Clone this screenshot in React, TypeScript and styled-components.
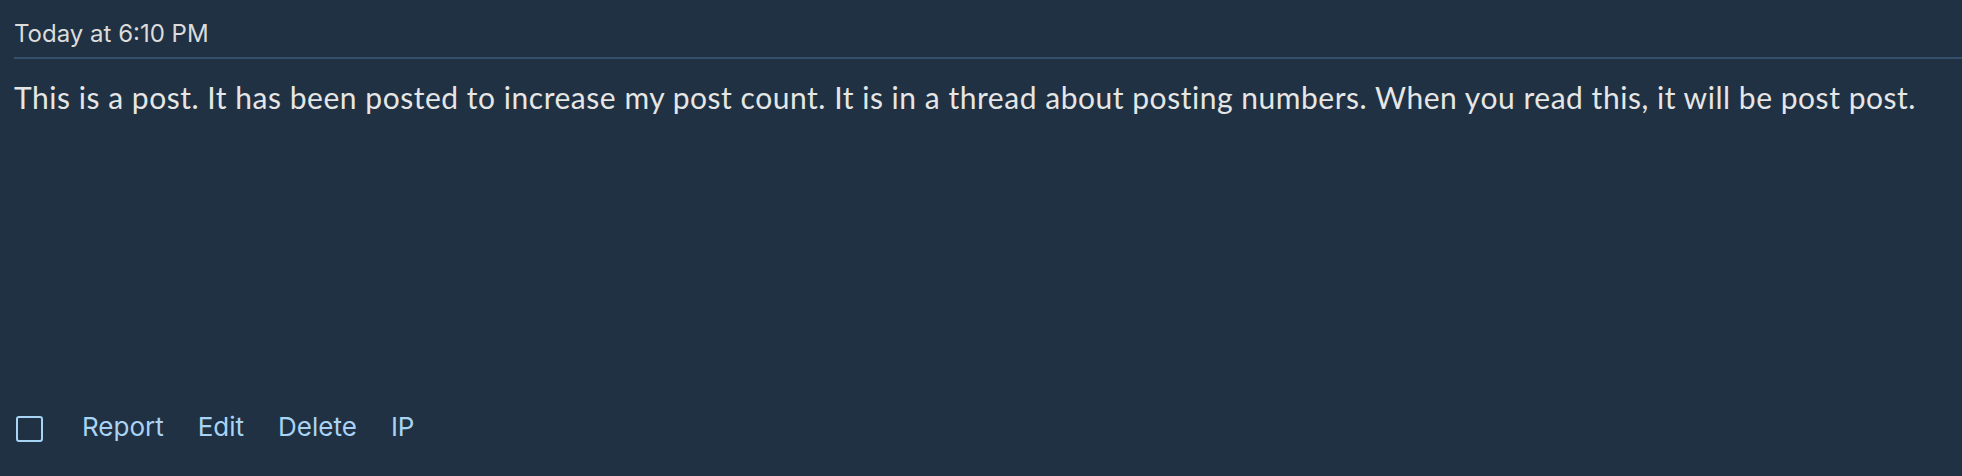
import styled, { createGlobalStyle } from "styled-components";

const GlobalStyle = createGlobalStyle`
  html, body {
    margin: 0;
    padding: 0;
    background: #1f3142;
  }
`;

const actions = ["Report", "Edit", "Delete", "IP"];

export default function App() {
  return (
    <>
      <GlobalStyle />
      <Post>
        <PostHeader>
          <time>Today at 6:10 PM</time>
        </PostHeader>
        <PostBody>
          This is a post. It has been posted to increase my post count. It is
          in a thread about posting numbers. When you read this, it will be
          post post.
        </PostBody>
        <Actions>
          <Checkbox type="checkbox" aria-label="Select post" />
          {actions.map((label) => (
            <ActionLink key={label} href="#">
              {label}
            </ActionLink>
          ))}
        </Actions>
      </Post>
    </>
  );
}

const Post = styled.article`
  display: flex;
  flex-direction: column;
  height: 476px;
  box-sizing: border-box;
  padding-left: 14px;
  background: #1f3142;
`;

const PostHeader = styled.header`
  padding: 18px 0 7px 0;
  border-bottom: 2px solid #34506c;
  font-family: Inter, "Liberation Sans", sans-serif;
  font-size: 24px;
  line-height: 32px;
  color: #dcdcdc;
`;

const PostBody = styled.div`
  margin-top: 17px;
  font-family: Lato, "Open Sans", sans-serif;
  font-size: 30px;
  letter-spacing: 0.53px;
  line-height: 42px;
  color: #e6e6e6;
`;

const Actions = styled.footer`
  display: flex;
  align-items: center;
  gap: 34px;
  margin-top: auto;
  padding-bottom: 34px;
  font-family: Inter, "Liberation Sans", sans-serif;
  font-size: 26px;
  line-height: 1.21;
`;

const Checkbox = styled.input`
  appearance: none;
  margin: 5px 5px 0 2px;
  width: 27px;
  height: 26px;
  box-sizing: border-box;
  border: 2px solid #a8d4f6;
  border-radius: 3px;
  background: transparent;
`;

const ActionLink = styled.a`
  color: #a9d3f5;
  text-decoration: none;
`;
